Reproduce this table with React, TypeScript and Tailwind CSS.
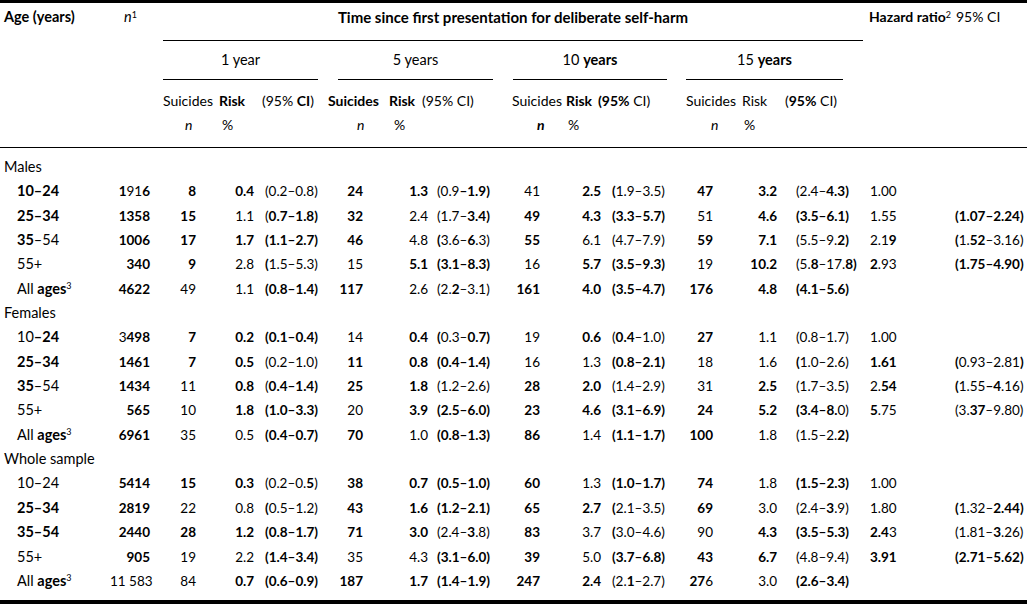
import React from 'react';

// one cell of text: * toggles bold, ^x is a superscript character
function rich(s: string) {
  const out: React.ReactNode[] = [];
  let bold = false;
  s.split(/(\*|\^.)/).forEach((part, i) => {
    if (part === '*') {
      bold = !bold;
      return;
    }
    if (!part) return;
    if (part.startsWith('^')) {
      out.push(
        <sup key={i} className="text-[9px]">
          {part.slice(1)}
        </sup>
      );
      return;
    }
    out.push(
      <span key={i} className={bold ? 'font-bold' : undefined}>
        {part}
      </span>
    );
  });
  return out;
}

// body columns: width + alignment (numbers a touch smaller, Lato digits run wide)
const cols = [
  'w-[110px] pl-[17px]',
  'w-[50px] text-right pr-[10px] text-[13.5px]',
  'w-[52px] text-right pr-[16px] text-[13.5px]',
  'w-[46px] text-right pr-[4px] text-[13.5px]',
  'w-[65px] pl-[7px] text-[13.5px]',
  'w-[49px] text-right pr-[9px] text-[13.5px]',
  'w-[60px] text-right pr-[4px] text-[13.5px]',
  'w-[73px] pl-[5px] text-[13.5px]',
  'w-[44px] text-right pr-[9px] text-[13.5px]',
  'w-[56px] text-right pr-[4px] text-[13.5px]',
  'w-[75px] pl-[7px] text-[13.5px]',
  'w-[42px] text-right pr-[9px] text-[13.5px]',
  'w-[59px] text-right pr-[4px] text-[13.5px]',
  'w-[84px] pl-[15px] text-[13.5px]',
  'w-[85px] pl-[5px] text-[13.5px]',
  'w-[77px] pl-[5px] text-[13.5px]',
];

type Section = { title: string; rows: string[][] };

const sections: Section[] = [
  {
    title: 'Males',
    rows: [
      ['*10–24*', '*1*91*6*', '*8*', '*0.4*', '(0.2–0.8)', '*24*', '*1.3*', '(0.9*–1.9)*', '41', '*2.5*', '*(*1.9–3.5)', '*47*', '*3.2*', '(2.4–*4.3)*', '1.00', ''],
      ['*25–34*', '*1358*', '*15*', '1.1', '(*0.7–1.8)*', '*32*', '2.4', '(1.7–*3.4)*', '*49*', '*4.3*', '*(3.3–5.7)*', '51', '*4.6*', '*(3.5–6.1)*', '1.55', '*(1.07–2.24)*'],
      ['*35*–54', '*1006*', '*17*', '*1.7*', '*(1.1–2.7)*', '*46*', '4.8', '*(*3.6–*6*.3)', '*55*', '6.1', '(4.7–7.9)', '*59*', '*7.1*', '(5.5–9.*2)*', '2.1*9*', '*(*1.*52*–3.16)'],
      ['55+', '*340*', '*9*', '2.8', '*(*1.5–5.3)', '15', '*5.1*', '*(3.1–8.3)*', '16', '*5.7*', '*(3.5–9.3)*', '19', '*10.2*', '(5.*8*–17.*8)*', '*2*.93', '*(1.75–4.90)*'],
      ['All *ages*^3', '*4622*', '49', '1.1', '*(0.8–1.4)*', '*117*', '2.6', '(2.*2*–3.1)', '*161*', '*4.0*', '*(3.5–4.7)*', '*176*', '*4.8*', '*(4.1–5.6)*', '', ''],
    ],
  },
  {
    title: 'Females',
    rows: [
      ['10*–24*', '3*498*', '*7*', '*0.2*', '*(0.1–0.4)*', '14', '*0.4*', '*(*0.3–*0.7)*', '19', '*0.6*', '(*0.4*–1.0)', '*27*', '1.1', '(0.8–1.7)', '1.00', ''],
      ['*25–34*', '*1461*', '*7*', '*0.5*', '(0.2–1.0)', '*11*', '*0.8*', '*(0.4–1.4)*', '16', '1.3', '*(0.8–2.1)*', '18', '1.6', '*(*1.0–2.6)', '*1.61*', '*(*0.93–2.81*)*'],
      ['*35*–54', '*1434*', '11', '*0.8*', '(*0.4–1.4)*', '*25*', '*1.8*', '(1.2–2.6)', '*28*', '*2.0*', '(1.4–2.9)', '31', '*2.5*', '(1.7–3.5)', '2.*54*', '*(*1.55*–4*.16)'],
      ['55+', '*565*', '10', '*1.8*', '*(1.0–3.3)*', '20', '*3.9*', '*(2.5–6.0)*', '*23*', '*4.6*', '*(3.1–6.9)*', '*24*', '*5.2*', '*(3.4–8.*0)', '*5*.75', '(3.*37*–9.80)'],
      ['All *ages*^3', '*6961*', '35', '0.5', '*(0.4–0.7)*', '*70*', '1.0', '*(0.8–1.3)*', '*86*', '1.4', '*(1.1–1.7)*', '*100*', '1.8', '(1.5–2.*2)*', '', ''],
    ],
  },
  {
    title: 'Whole sample',
    rows: [
      ['10–24', '*5414*', '*15*', '*0.3*', '(0.2–0.*5*)', '*38*', '*0.7*', '*(0.5–1.0)*', '*60*', '1.3', '*(1.0–1.7)*', '*74*', '1.8', '*(1.5–2.3)*', '1.00', ''],
      ['*25–34*', '*2819*', '22', '0.8', '*(*0.5–1.2)', '*43*', '*1.6*', '*(1.2–2.1)*', '*65*', '*2.7*', '*(*2.1–3.5)', '*69*', '3.0', '(2.4–*3*.9)', '1.80', '*(*1.32–*2.44)*'],
      ['*35–54*', '*2440*', '*28*', '*1.2*', '*(0.8–1.7)*', '*71*', '*3.0*', '(2.4–*3*.8)', '*83*', '3.7', '*(*3.0–4.6)', '90', '*4.3*', '*(3.5–5.3)*', '*2.4*3', '(1.81–*3*.26)'],
      ['55+', '*905*', '19', '2.2', '*(1.4–3.4)*', '35', '4.3', '*(3.1–6.0)*', '*39*', '5.0', '*(3.7–6.8)*', '*43*', '*6.7*', '(4.8–9.4)', '*3.91*', '*(2.71–5.62)*'],
      ['All *ages*^3', '11 583', '84', '*0.7*', '*(0.6–0.9)*', '*187*', '*1.7*', '*(1.4–1.9)*', '*247*', '*2.4*', '(2.*1*–2.7)', '*27*6', '3.0', '*(2.6–3.4)*', '', ''],
    ],
  },
];

export default function App() {
  return (
    <div className="w-[1027px] h-[616px] overflow-hidden bg-white text-[14.5px] text-black font-['Lato','Open_Sans',sans-serif]">
      <div className="border-t-[3px] border-black">
        {/* top header line */}
        <div className="flex h-[38px] leading-[28px] whitespace-nowrap">
          <div className="w-[110px] pl-[4px] font-bold">Age (years)</div>
          <div className="w-[53px] pl-[14px] italic">
            n<sup className="text-[9px] not-italic">1</sup>
          </div>
          <div className="w-[700px] h-[38px] border-b border-black text-center font-bold text-[15px]">
            Time since first presentation for deliberate self-harm
          </div>
          <div className="w-[92px] pl-[6px] font-bold text-[14px]">
            Hazard ratio<sup className="text-[9px] font-normal">2</sup>
          </div>
          <div className="flex-1 pl-[1px] text-[14px]">95% CI</div>
        </div>

        {/* period groups */}
        <div className="flex h-[39px] leading-[38px] whitespace-nowrap">
          <div className="w-[163px]" />
          <div className="w-[155px] h-[39px] border-b border-black text-center">1 year</div>
          <div className="w-[20px]" />
          <div className="w-[155px] h-[39px] border-b border-black text-center">5 years</div>
          <div className="w-[20px]" />
          <div className="w-[154px] h-[39px] border-b border-black text-center">
            10 <span className="font-bold">years</span>
          </div>
          <div className="w-[19px]" />
          <div className="w-[157px] h-[39px] border-b border-black text-center">
            15 <span className="font-bold">years</span>
          </div>
        </div>

        {/* sub headings */}
        <div className="pt-[9px] pb-[10px] border-b border-black whitespace-nowrap text-[14px]">
          <div className="flex h-[24px] leading-[24px]">
            <div className="w-[163px]" />
            <div className="w-[56px]">Suicides</div>
            <div className="w-[43px] font-bold">Risk</div>
            <div className="w-[66px]">(95% <span className="font-bold">CI</span>)</div>
            <div className="w-[61px] font-bold">Suicides</div>
            <div className="w-[33px] font-bold">Risk</div>
            <div className="w-[90px]">(95% CI)</div>
            <div className="w-[54px]">Suicides</div>
            <div className="w-[32px] font-bold">Risk</div>
            <div className="w-[88px]">
              <span className="font-bold">(95%</span> CI)
            </div>
            <div className="w-[56px]">Suicides</div>
            <div className="w-[43px]">Risk</div>
            <div className="flex-1">
              (<span className="font-bold">95%</span> CI)
            </div>
          </div>
          <div className="flex h-[24px] leading-[24px]">
            <div className="w-[185px]" />
            <div className="w-[37px] italic">n</div>
            <div className="w-[135px]">%</div>
            <div className="w-[37px] italic">n</div>
            <div className="w-[143px]">%</div>
            <div className="w-[31px] italic font-bold">n</div>
            <div className="w-[143px]">%</div>
            <div className="w-[33px] italic">n</div>
            <div className="flex-1">%</div>
          </div>
        </div>

        {/* body */}
        <div className="pt-[7px] pb-[7px] border-b-4 border-black whitespace-nowrap">
          {sections.map((sec) => (
            <div key={sec.title}>
              <div className="h-[24.35px] leading-[24.35px] pl-[4px]">{sec.title}</div>
              {sec.rows.map((row, r) => (
                <div key={r} className="flex h-[24.35px] leading-[24.35px]">
                  {row.map((cell, c) => (
                    <div key={c} className={cols[c]}>
                      {rich(cell)}
                    </div>
                  ))}
                </div>
              ))}
            </div>
          ))}
        </div>
      </div>
    </div>
  );
}
